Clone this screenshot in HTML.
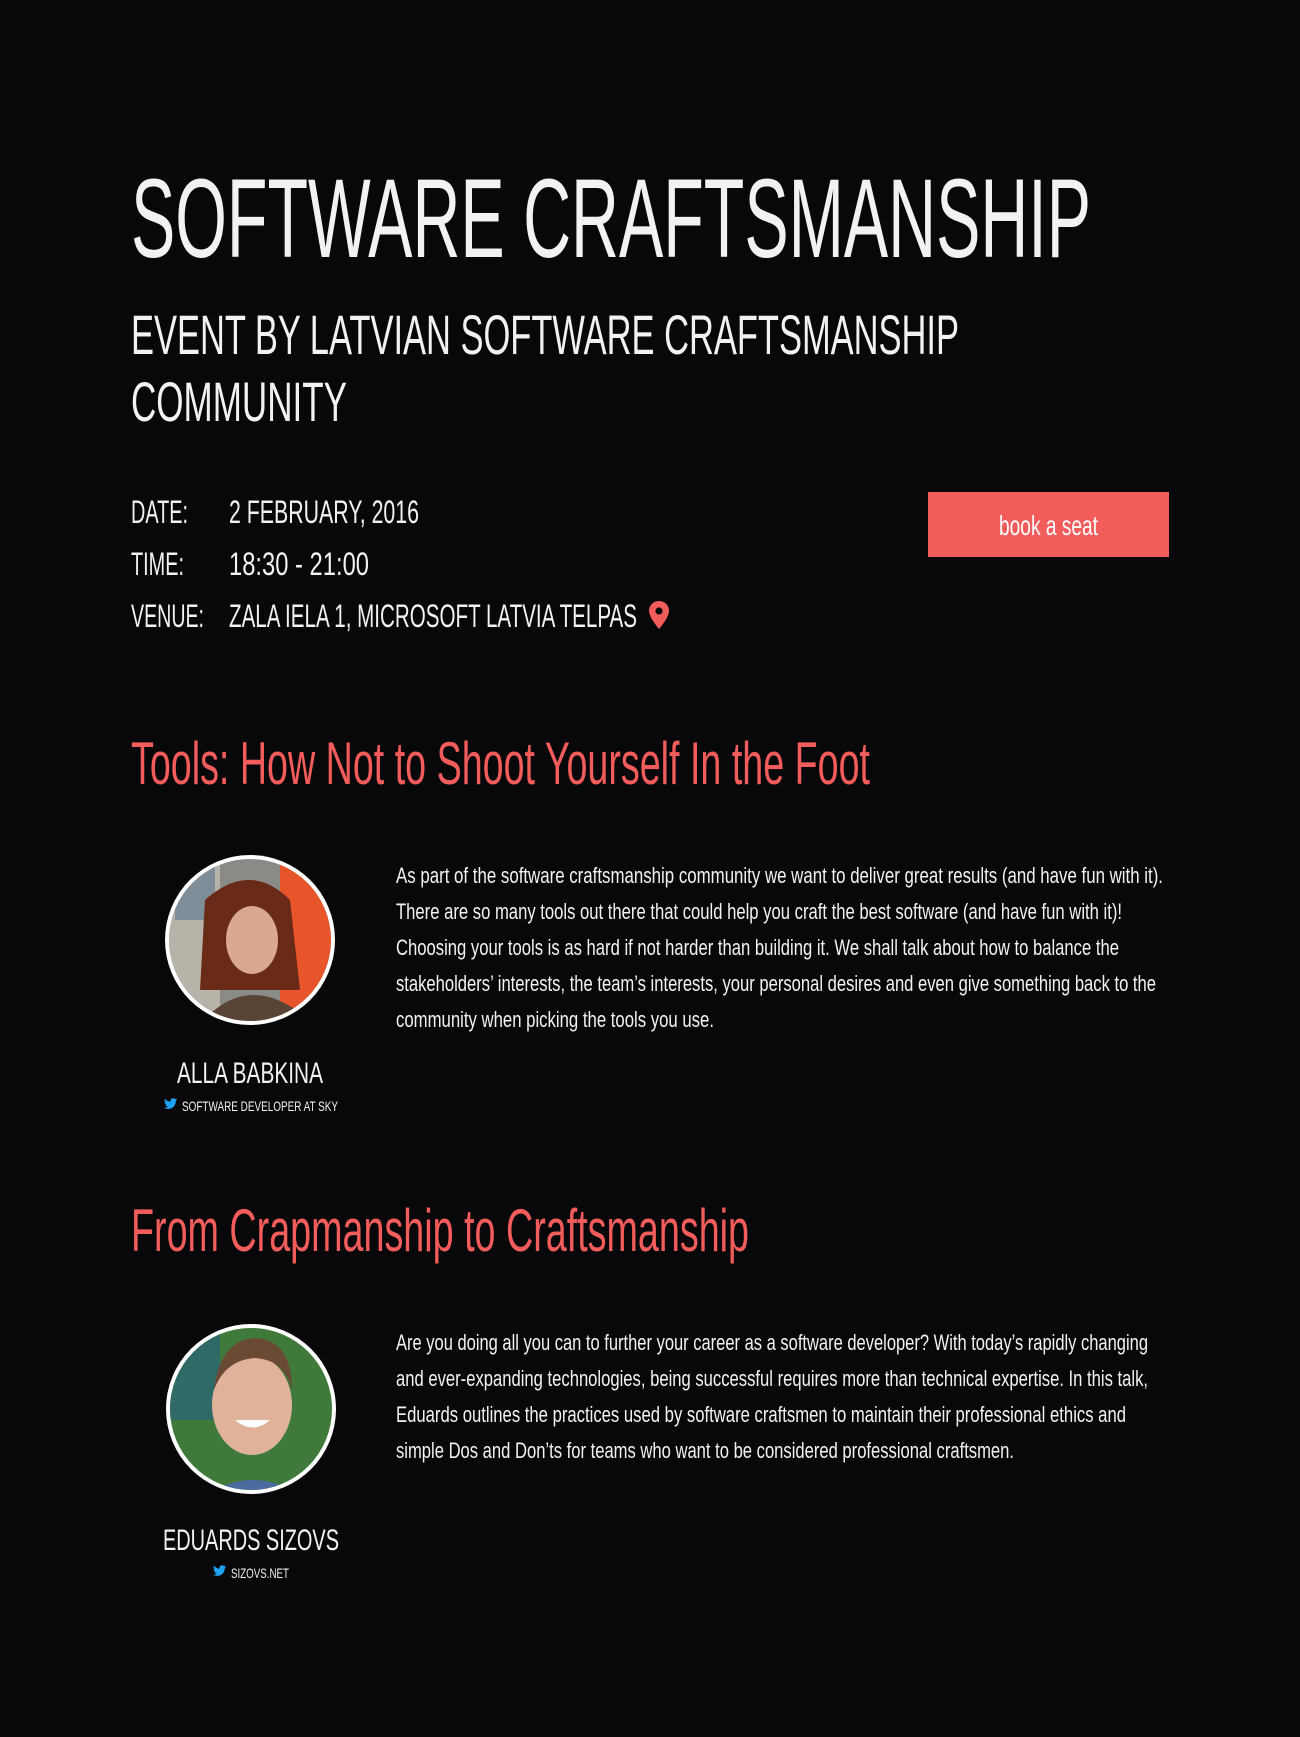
<!DOCTYPE html>
<html><head><meta charset="utf-8"><style>
html,body{margin:0;padding:0;background:#08080a;}
svg{display:block}
text{font-family:"Liberation Sans Narrow","Liberation Sans",sans-serif;}
</style></head><body>
<svg width="1300" height="1737" viewBox="0 0 1300 1737" xmlns="http://www.w3.org/2000/svg">
<defs>
<clipPath id="c1"><circle cx="250" cy="940" r="81"/></clipPath>
<clipPath id="c2"><circle cx="251" cy="1409" r="81"/></clipPath>
</defs>
<rect width="1300" height="1737" fill="#08080a"/>
<g fill="#f2f2f2">
<text x="131" y="257" font-size="112" textLength="960" lengthAdjust="spacingAndGlyphs">SOFTWARE CRAFTSMANSHIP</text>
<text x="131" y="354" font-size="56" textLength="828" lengthAdjust="spacingAndGlyphs">EVENT BY LATVIAN SOFTWARE CRAFTSMANSHIP</text>
<text x="131" y="421" font-size="56" textLength="216" lengthAdjust="spacingAndGlyphs">COMMUNITY</text>
<text x="131" y="523" font-size="32" textLength="57" lengthAdjust="spacingAndGlyphs">DATE:</text>
<text x="229" y="523" font-size="32" textLength="190" lengthAdjust="spacingAndGlyphs">2 FEBRUARY, 2016</text>
<text x="131" y="575" font-size="32" textLength="53" lengthAdjust="spacingAndGlyphs">TIME:</text>
<text x="229" y="575" font-size="32" textLength="140" lengthAdjust="spacingAndGlyphs">18:30 - 21:00</text>
<text x="131" y="627" font-size="32" textLength="73" lengthAdjust="spacingAndGlyphs">VENUE:</text>
<text x="229" y="627" font-size="32" textLength="408" lengthAdjust="spacingAndGlyphs">ZALA IELA 1, MICROSOFT LATVIA TELPAS</text>
</g>
<path d="M659 601c-5.5 0-10 4.3-10 9.8 0 7 10 18.2 10 18.2s10-11.2 10-18.2c0-5.5-4.5-9.8-10-9.8z" fill="#f25c5a"/>
<circle cx="659" cy="611" r="3.6" fill="#08080a"/>
<rect x="928" y="492" width="241" height="65" fill="#f25c5a"/>
<text x="999" y="535" font-size="28" fill="#fff" textLength="99" lengthAdjust="spacingAndGlyphs">book a seat</text>

<g fill="#f25c5a">
<text x="131" y="784" font-size="60" textLength="739" lengthAdjust="spacingAndGlyphs">Tools: How Not to Shoot Yourself In the Foot</text>
<text x="131" y="1251" font-size="60" textLength="618" lengthAdjust="spacingAndGlyphs">From Crapmanship to Craftsmanship</text>
</g>

<!-- avatar 1 -->
<circle cx="250" cy="940" r="85" fill="#fff"/>
<g clip-path="url(#c1)">
<rect x="160" y="850" width="180" height="180" fill="#8a8a86"/>
<rect x="160" y="850" width="60" height="180" fill="#b7b3a8"/>
<rect x="175" y="860" width="40" height="60" fill="#7f8d99"/>
<rect x="280" y="860" width="60" height="170" fill="#e8552a"/>
<path d="M205 900 Q250 860 290 900 L300 990 L200 990 Z" fill="#6a2a18"/>
<ellipse cx="252" cy="940" rx="26" ry="34" fill="#d9a88e"/>
<path d="M195 1030 Q250 960 320 1030 Z" fill="#5a4436"/>
</g>
<!-- avatar 2 -->
<circle cx="251" cy="1409" r="85" fill="#fff"/>
<g clip-path="url(#c2)">
<rect x="160" y="1320" width="185" height="180" fill="#3f7a3a"/>
<rect x="160" y="1320" width="60" height="100" fill="#2f6a66"/>
<path d="M200 1500 Q250 1460 310 1500 Z" fill="#4a6aa0"/>
<ellipse cx="252" cy="1405" rx="40" ry="50" fill="#e0b29a"/>
<path d="M214 1390 Q220 1340 255 1338 Q292 1340 292 1390 Q285 1360 255 1358 Q225 1360 214 1390Z" fill="#6a4a34"/>
<path d="M235 1420 Q253 1435 270 1420 Z" fill="#fff"/>
</g>

<g fill="#f2f2f2" font-size="22">
<text x="396" y="883" textLength="767" lengthAdjust="spacingAndGlyphs">As part of the software craftsmanship community we want to deliver great results (and have fun with it).</text>
<text x="396" y="919" textLength="726" lengthAdjust="spacingAndGlyphs">There are so many tools out there that could help you craft the best software (and have fun with it)!</text>
<text x="396" y="955" textLength="723" lengthAdjust="spacingAndGlyphs">Choosing your tools is as hard if not harder than building it. We shall talk about how to balance the</text>
<text x="396" y="991" textLength="760" lengthAdjust="spacingAndGlyphs">stakeholders’ interests, the team’s interests, your personal desires and even give something back to the</text>
<text x="396" y="1027" textLength="318" lengthAdjust="spacingAndGlyphs">community when picking the tools you use.</text>
<text x="396" y="1350" textLength="752" lengthAdjust="spacingAndGlyphs">Are you doing all you can to further your career as a software developer? With today’s rapidly changing</text>
<text x="396" y="1386" textLength="752" lengthAdjust="spacingAndGlyphs">and ever-expanding technologies, being successful requires more than technical expertise. In this talk,</text>
<text x="396" y="1422" textLength="730" lengthAdjust="spacingAndGlyphs">Eduards outlines the practices used by software craftsmen to maintain their professional ethics and</text>
<text x="396" y="1458" textLength="618" lengthAdjust="spacingAndGlyphs">simple Dos and Don’ts for teams who want to be considered professional craftsmen.</text>
</g>

<g fill="#f2f2f2">
<text x="177" y="1083" font-size="30" textLength="146" lengthAdjust="spacingAndGlyphs">ALLA BABKINA</text>
<text x="182" y="1111" font-size="14" textLength="156" lengthAdjust="spacingAndGlyphs">SOFTWARE DEVELOPER AT SKY</text>
<text x="163" y="1550" font-size="30" textLength="176" lengthAdjust="spacingAndGlyphs">EDUARDS SIZOVS</text>
<text x="231" y="1578" font-size="14" textLength="58" lengthAdjust="spacingAndGlyphs">SIZOVS.NET</text>
</g>
<g fill="#1da1f2">
<path transform="translate(164,1097) scale(0.55)" d="M24 4.6c-.9.4-1.8.6-2.8.8 1-.6 1.8-1.6 2.2-2.7-1 .6-2 1-3.1 1.2C19.3 2.9 18 2.3 16.6 2.3c-2.7 0-4.9 2.2-4.9 4.9 0 .4 0 .8.1 1.1C7.7 8.1 4.1 6.1 1.7 3.1c-.4.7-.7 1.6-.7 2.5 0 1.7.9 3.2 2.2 4.1-.8 0-1.6-.2-2.2-.6v.1c0 2.4 1.7 4.4 3.9 4.8-.4.1-.8.2-1.3.2-.3 0-.6 0-.9-.1.6 2 2.4 3.4 4.6 3.4-1.7 1.3-3.8 2.1-6.1 2.1-.4 0-.8 0-1.2-.1 2.2 1.4 4.8 2.2 7.5 2.2 9.1 0 14-7.5 14-14v-.6c1-.7 1.8-1.6 2.5-2.5z"/>
<path transform="translate(213,1564) scale(0.55)" d="M24 4.6c-.9.4-1.8.6-2.8.8 1-.6 1.8-1.6 2.2-2.7-1 .6-2 1-3.1 1.2C19.3 2.9 18 2.300 16.6 2.3c-2.7 0-4.9 2.2-4.9 4.9 0 .4 0 .8.1 1.1C7.7 8.1 4.1 6.1 1.7 3.1c-.4.7-.7 1.6-.7 2.5 0 1.7.9 3.2 2.2 4.1-.8 0-1.6-.2-2.2-.6v.1c0 2.4 1.7 4.4 3.9 4.8-.4.1-.8.2-1.3.2-.3 0-.6 0-.9-.1.6 2 2.4 3.4 4.6 3.4-1.7 1.3-3.8 2.1-6.1 2.1-.4 0-.8 0-1.2-.1 2.2 1.4 4.8 2.2 7.5 2.2 9.1 0 14-7.5 14-14v-.6c1-.7 1.8-1.6 2.5-2.5z"/>
</g>
</svg>
</body></html>
